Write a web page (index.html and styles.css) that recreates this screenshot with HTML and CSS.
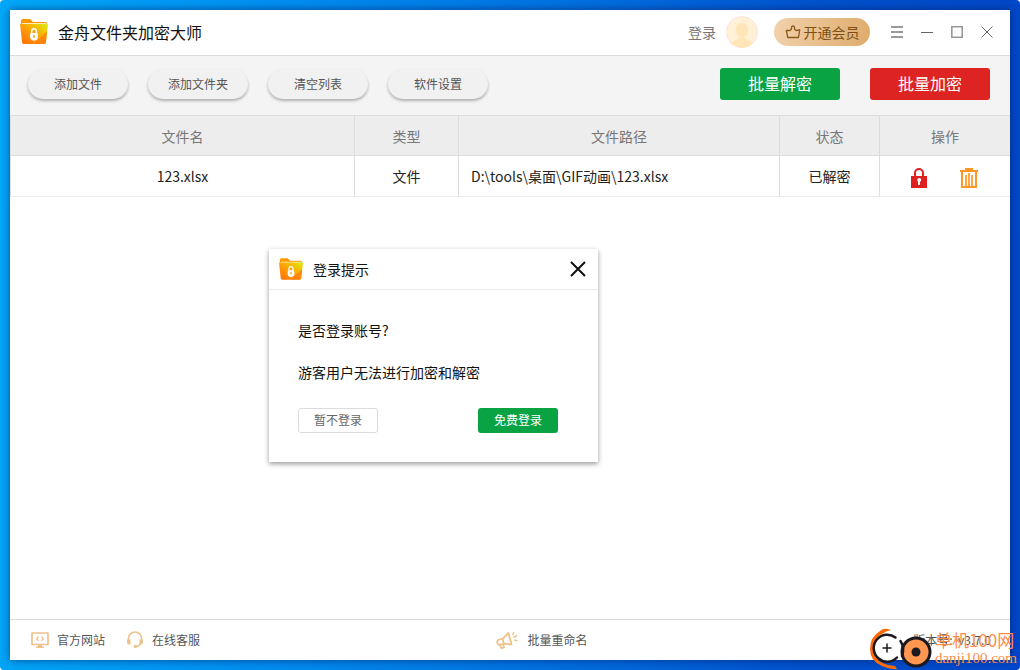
FILE: index.html
```html
<!DOCTYPE html>
<html lang="zh-CN">
<head>
<meta charset="utf-8">
<title>金舟文件夹加密大师</title>
<link rel="stylesheet" href="styles.css">
</head>
<body>
<svg class="defs" width="0" height="0" aria-hidden="true">
  <defs>
    <linearGradient id="folder-fill" x1="0" y1="1" x2="1" y2="0">
      <stop offset="0" stop-color="#ff6a00"/>
      <stop offset="0.45" stop-color="#ff9a0c"/>
      <stop offset="0.75" stop-color="#f0c800"/>
      <stop offset="1" stop-color="#d8ec20"/>
    </linearGradient>
    <symbol id="folder" viewBox="0 0 28 25">
      <path d="M1 2Q1 0 3 0H10L13 3H25Q27 3 27 5V9H1Z" fill="#ff9600"/>
      <path d="M2 4H26V9H2Z" fill="#ffedb8"/>
      <path d="M0 5H28L26 23Q26 25 24 25H4Q2 25 2 23Z" fill="url(#folder-fill)"/>
      <path d="M14 25 27 12 26 23Q26 25 24 25Z" fill="#ff7a10" opacity=".7"/>
      <path d="M11.700 14.500V12a2.300 2.300 0 0 1 4.600 0V14.500" fill="none" stroke="#fff" stroke-width="1.500"/>
      <path d="M10.500 14h7q1.200 3.500 0 6-3.500 3.500-7 0-1.200-2.500 0-6Z" fill="#fff"/>
      <path d="M14 16v3" stroke="#f6a21c" stroke-width="1.500"/>
    </symbol>
  </defs>
</svg>
<div class="window">
  <header class="titlebar">
    <svg class="app-icon"><use href="#folder"/></svg>
    <h1 class="app-title">金舟文件夹加密大师</h1>
    <a class="login" href="#">登录</a>
    <svg class="avatar" viewBox="0 0 32 32" aria-hidden="true">
      <circle cx="16" cy="16" r="15.5" fill="#fff1d8" stroke="#ffe0dc"/>
      <path d="M16 7c-4 0-6 3-6 6 0 4 1 6 3 8 0 3-5 3-8 6a15 15 0 0 0 22 0c-3-3-8-3-8-6 2-2 3-4 3-8 0-3-2-6-6-6Z" fill="#ffe5b8"/>
    </svg>
    <button class="vip" type="button">
      <svg width="16" height="14" viewBox="0 0 16 14" aria-hidden="true"><path d="M2.800 12.500 1.300 5.500H5L6.500 4V2.500a1.500 1.500 0 0 1 3 0V4L11 5.500l3.700-.7-1.200 7.700Z" fill="none" stroke="#8a5a1c" stroke-width="1.300" stroke-linejoin="round"/></svg>
      开通会员
    </button>
    <div class="window-controls">
      <button type="button" aria-label="菜单"><svg width="12" height="12" viewBox="0 0 12 12"><path d="M0 1h12M0 6h12M0 11h12" stroke="#999" stroke-width="2"/></svg></button>
      <button type="button" aria-label="最小化"><svg width="12" height="12" viewBox="0 0 12 12"><path d="M0 6.500h12" stroke="#666"/></svg></button>
      <button type="button" aria-label="最大化"><svg width="12" height="12" viewBox="0 0 12 12"><path d="M.8 .8h10.400v10.400H.8Z" fill="none" stroke="#999" stroke-width="1.600"/></svg></button>
      <button type="button" aria-label="关闭"><svg width="12" height="12" viewBox="0 0 12 12"><path d="m.5 .5 11 11m0-11-11 11" stroke="#666"/></svg></button>
    </div>
  </header>

  <nav class="toolbar">
    <button class="pill" type="button">添加文件</button>
    <button class="pill" type="button">添加文件夹</button>
    <button class="pill" type="button">清空列表</button>
    <button class="pill" type="button">软件设置</button>
    <div class="batch">
      <button class="big green" type="button">批量解密</button>
      <button class="big red" type="button">批量加密</button>
    </div>
  </nav>

  <main class="content">
    <table class="files">
      <colgroup><col><col class="col-type"><col class="col-path"><col class="col-state"><col class="col-action"></colgroup>
      <thead><tr><th>文件名</th><th>类型</th><th>文件路径</th><th>状态</th><th>操作</th></tr></thead>
      <tbody><tr>
        <td>123.xlsx</td><td>文件</td><td class="path">D:\tools\桌面\GIF动画\123.xlsx</td><td>已解密</td>
        <td><div class="actions">
          <button type="button" aria-label="加密"><svg width="18" height="20" viewBox="0 0 18 20"><path d="M5 9V5a4 4 0 0 1 8 0v4" fill="none" stroke="#e02020" stroke-width="2"/><path d="M1 8h16v12H1Z" fill="#e02020"/><path d="M7.200 12a2 2 0 1 1 2.800 1.800V17H8v-3.200Z" fill="#fff"/></svg></button>
          <button type="button" aria-label="删除"><svg width="18" height="20" viewBox="0 0 18 20"><path d="M5 0h8v2h5v2H0V2h5Z" fill="#ff9626"/><path d="M2 4v15h14V4" fill="none" stroke="#ff9626" stroke-width="2"/><path d="M6 7v11M9 5v13M12 7v11" stroke="#ff9626" stroke-width="1.700"/></svg></button>
        </div></td>
      </tr></tbody>
    </table>
  </main>

  <footer class="footer">
    <a class="site" href="#"><svg width="18" height="16" viewBox="0 0 18 16" aria-hidden="true"><path d="M1 1h16v11.500H1Z" fill="none" stroke="#edc28d" stroke-width="1.700" stroke-linejoin="round"/><path d="m7.500 4.700-2 2 2 2m3-4 2 2-2 2" fill="none" stroke="#edc28d" stroke-width="1.300"/><path d="M7 13h4v1.500h2V16H5v-1.500h2Z" fill="#edc28d"/></svg>官方网站</a>
    <a class="service" href="#"><svg width="18" height="18" viewBox="0 0 18 18" aria-hidden="true"><path d="M2.500 10V7.500a6.500 6.500 0 0 1 13 0V10q0 4-5 5.500" fill="none" stroke="#edc28d" stroke-width="1.500"/><path d="M1 8.500h3.500v5H3q-2 0-2-2.500ZM17 8.500h-3.500v5H15q2 0 2-2.500Z" fill="#edc28d"/><circle cx="9.500" cy="15.500" r="1.800" fill="#edc28d"/></svg>在线客服</a>
    <a class="rename" href="#"><svg width="22" height="18" viewBox="0 0 22 18" aria-hidden="true"><path d="M2 9 7 7.500 12.500 2l3 11.500L8 12.500l-5 1.500q-3-2-1-5ZM6.500 8l1.500 4.500M4 14l1.500 3.300 2.500-1-1-3" fill="none" stroke="#edc28d" stroke-width="1.800" stroke-linejoin="round"/><path d="m16.500 4 1.500-3M17.500 6.500l3.500-2M18 9l3.500.7" stroke="#edc28d" stroke-width="1.500"/></svg>批量重命名</a>
    <span class="version">版本号:&nbsp; v3.7.0</span>
  </footer>
</div>

<section class="dialog" role="dialog" aria-labelledby="dialog-title">
  <header class="dialog-head">
    <svg class="dialog-icon"><use href="#folder"/></svg>
    <h2 class="dialog-title" id="dialog-title">登录提示</h2>
    <button class="dialog-close" type="button" aria-label="关闭"><svg width="16" height="16" viewBox="0 0 16 16"><path d="m1 1 14 14M15 1 1 15" stroke="#111" stroke-width="2"/></svg></button>
  </header>
  <div class="dialog-body">
    <p>是否登录账号?</p>
    <p>游客用户无法进行加密和解密</p>
    <div class="dialog-buttons">
      <button class="small outline" type="button">暂不登录</button>
      <button class="small green" type="button">免费登录</button>
    </div>
  </div>
</section>

<div class="watermark">
  <svg width="64" height="42" viewBox="0 0 64 42" aria-hidden="true">
    <path d="M21 2Q14-1 10 3 0 9 0 21 0 33 12 38q8 4 15 3l-2-3Q10 37 5 28 0 12 12 6q4-3 9-4Z" fill="#ff6a08"/>
    <circle cx="17" cy="20" r="13.500" fill="#fff"/>
    <path d="M25.500 9.500A13.500 13.500 0 1 0 27 29.500" fill="none" stroke="#1c1a20" stroke-width="2.500" stroke-linecap="round"/>
    <path d="M17 15.500v9M12.500 20h9" stroke="#1c1a20" stroke-width="1.500"/>
    <circle cx="46" cy="24" r="14" fill="#ff9750" stroke="#1c1a20" stroke-width="3"/>
    <path d="M30.500 13Q35 20 32 28" fill="none" stroke="#1c1a20" stroke-width="2.500" stroke-linecap="round"/>
    <circle cx="46" cy="24" r="4.500" fill="#1c1a20"/>
  </svg>
  <div class="watermark-text"><span class="watermark-name">单机100网</span><span class="watermark-url">danji100.com</span></div>
</div>
</body>
</html>
```
FILE: styles.css
```css
* { box-sizing: border-box; }
html { height: 100%; background: #fff; }
body {
  position: relative;
  height: 100%;
  margin: 0;
  padding: 10px;
  border-radius: 4px;
  overflow: hidden;
  background: linear-gradient(93deg, #00a8f8 0%, #0090f2 25%, #0070e0 55%, #0050cc 80%, #0046c8 100%);
  color: #222;
  font: 14px/20px "Noto Sans CJK SC", sans-serif;
}
h1, h2, p { margin: 0; font-weight: 400; }
button { margin: 0; padding: 0; border: 0; background: none; color: inherit; font: inherit; }
a { color: inherit; text-decoration: none; }
svg { display: block; flex: none; }
.defs { position: absolute; }

.window {
  display: flex;
  flex-direction: column;
  height: 100%;
  background: #fff;
  box-shadow: 0 0 8px rgba(0, 20, 80, .6);
}
.titlebar {
  display: flex;
  align-items: center;
  height: 46px;
  padding: 0 17px 2px 10px;
  border-bottom: 1px solid #dcdcdc;
}
.app-icon { width: 28px; height: 25px; }
.app-title { margin-left: 10px; font-size: 16px; color: #111; }
.login { margin-left: auto; color: #777; }
.avatar { width: 32px; height: 32px; margin-left: 10px; }
.vip {
  display: flex;
  align-items: center;
  justify-content: center;
  gap: 3px;
  width: 96px;
  height: 28px;
  margin-left: 16px;
  border-radius: 14px;
  background: linear-gradient(100deg, #f2d1ac, #deac6c);
  color: #7c5014;
}
.window-controls { display: flex; gap: 18px; margin-left: 21px; }

.toolbar {
  display: flex;
  align-items: center;
  gap: 20px;
  height: 60px;
  padding: 0 20px 4px 18px;
  border-bottom: 1px solid #dcdcdc;
  background: #f4f4f4;
}
.pill {
  width: 100px;
  height: 30px;
  border-radius: 15px;
  background: #f1f1f1;
  box-shadow: 0 2px 3px rgba(0, 0, 0, .28);
  color: #555;
  font-size: 12px;
}
.batch { display: flex; gap: 30px; margin-left: auto; }
.big { width: 120px; height: 32px; padding-bottom: 2px; border-radius: 3px; color: #fff; font-size: 16px; }
.green { background: #0aa344; color: #fff; }
.red { background: #de2422; }

.content { flex: 1; }
.files { width: 100%; table-layout: fixed; border-collapse: separate; border-spacing: 0; }
.col-type { width: 104px; }
.col-path { width: 321px; }
.col-state { width: 100px; }
.col-action { width: 131px; }
.files th, .files td {
  padding: 0;
  border-left: 1px solid #dcdcdc;
  border-bottom: 1px solid #dcdcdc;
  text-align: center;
  font-weight: 400;
}
.files th { height: 40px; background: #ededed; color: #777; }
.files td { height: 41px; border-bottom-color: #ebebeb; }
.files .path { padding-left: 12px; text-align: left; }
.actions { display: flex; justify-content: center; gap: 32px; padding: 4px 2px 0 0; }

.footer {
  display: flex;
  align-items: center;
  height: 41px;
  padding: 0 19px 0 21px;
  border-top: 1px solid #dcdcdc;
  color: #555;
  font-size: 12px;
}
.footer a { display: flex; align-items: center; gap: 8px; }
.footer .service { margin-left: 21px; }
.footer .rename { gap: 10px; margin: 0 auto; }
.version { min-width: 108px; text-align: right; white-space: nowrap; }

.dialog {
  position: absolute;
  left: 269px;
  top: 249px;
  width: 329px;
  background: #fff;
  box-shadow: 0 2px 5px rgba(0, 0, 0, .4);
  color: #111;
}
.dialog-head {
  display: flex;
  align-items: center;
  height: 41px;
  padding: 0 12px 0 10px;
  border-bottom: 1px solid #ebebeb;
}
.dialog-icon { width: 24px; height: 22px; }
.dialog-title { margin-left: 10px; font-size: 14px; }
.dialog-close { margin-left: auto; }
.dialog-body { display: grid; gap: 22px; padding: 30px 40px 29px 29px; }
.dialog-buttons { display: flex; justify-content: space-between; padding-top: 4px; }
.small { width: 80px; height: 25px; padding-bottom: 1px; border-radius: 3px; font-size: 12px; }
.outline { border: 1px solid #dcdcdc; color: #666; }

.watermark {
  position: absolute;
  right: 3px;
  bottom: 0;
  display: flex;
  align-items: center;
  gap: 1px;
  color: #ff8c4c;
}
.watermark-text { display: grid; padding-bottom: 2px; }
.watermark-name { font-size: 17px; line-height: 20px; }
.watermark-url { font: 15px/17px "Liberation Serif", serif; }
```
